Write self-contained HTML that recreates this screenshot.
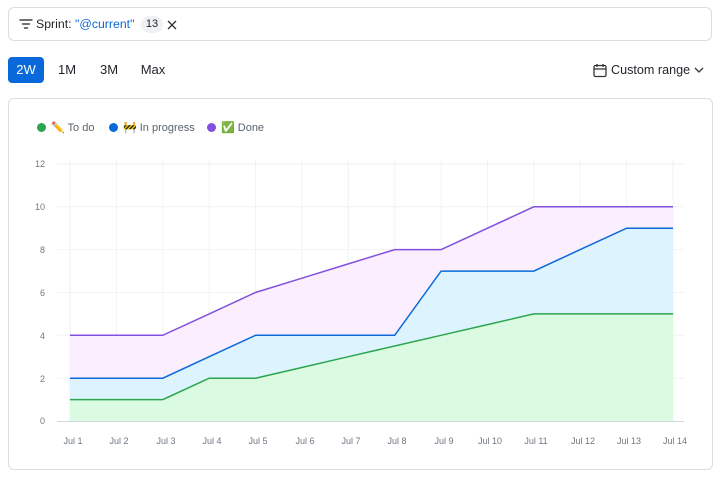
<!DOCTYPE html>
<html><head><meta charset="utf-8"><style>
body{margin:0;width:721px;height:478px;background:#fff;font-family:"Liberation Sans","Noto Sans CJK SC",sans-serif;position:relative;overflow:hidden;color:#1f2328}
.filter{position:absolute;left:8px;top:7px;width:704px;height:34px;border:1px solid #d8dee4;border-radius:6px;box-sizing:border-box}
.tab{position:absolute;top:57px;height:26px;line-height:26px;font-size:13px;text-align:center}
.card{position:absolute;left:8px;top:98px;width:705px;height:372px;border:1px solid #d8dee4;border-radius:6px;box-sizing:border-box}
.lg{position:absolute;top:121px;font-size:11px;color:#59636e}
.dot{display:inline-block;width:9px;height:9px;border-radius:50%;vertical-align:-1px;margin-right:5px}
</style></head><body>
<div class="filter">
<svg style="position:absolute;left:10px;top:10px" width="14" height="12" viewBox="0 0 14 12"><path d="M1 2h12M3.5 6h7M5.5 10h3" stroke="#444" stroke-width="1.4" stroke-linecap="round"/></svg>
<span style="position:absolute;left:27px;top:9px;font-size:12.3px">Sprint: <span style="color:#0969da">"@current"</span></span>
<span style="position:absolute;left:132px;top:8px;width:22px;height:17px;border-radius:9px;background:#eff1f3;font-size:11px;line-height:17px;text-align:center">13</span>
<svg style="position:absolute;left:158px;top:12px" width="10" height="10"><path d="M1 1l8 8M9 1l-8 8" stroke="#333" stroke-width="1.3"/></svg>
</div>
<div class="tab" style="left:8px;width:36px;background:#0969da;color:#fff;border-radius:4px">2W</div>
<div class="tab" style="left:52px;width:30px">1M</div>
<div class="tab" style="left:93px;width:32px">3M</div>
<div class="tab" style="left:136px;width:34px">Max</div>
<svg style="position:absolute;left:593px;top:63px" width="14" height="15" viewBox="0 0 14 15"><rect x="1" y="2.5" width="12" height="11" rx="1.5" fill="none" stroke="#333" stroke-width="1.3"/><path d="M1 6h12M4 1v3M10 1v3" stroke="#333" stroke-width="1.3"/></svg>
<span style="position:absolute;left:611px;top:63px;font-size:12.6px">Custom range</span>
<svg style="position:absolute;left:694px;top:67px" width="10" height="7"><path d="M1 1l4 4 4-4" fill="none" stroke="#333" stroke-width="1.3"/></svg>
<div class="card"></div>
<div class="lg" style="left:37px"><span class="dot" style="background:#2da44e"></span>✏️ To do</div>
<div class="lg" style="left:109px"><span class="dot" style="background:#0969da"></span>🚧 In progress</div>
<div class="lg" style="left:207px"><span class="dot" style="background:#8250df"></span>✅ Done</div>
<svg style="position:absolute;left:0;top:0" width="721" height="478">
<g stroke="#f1f2f4" stroke-width="1">
<path d="M57 164H684M57 206.8H684M57 249.6H684M57 292.5H684M57 335.3H684M57 378.2H684"/>
<path d="M70 160V421M116.4 160V421M162.8 160V421M209.2 160V421M255.5 160V421M301.9 160V421M348.3 160V421M394.7 160V421M441.1 160V421M487.5 160V421M533.8 160V421M580.2 160V421M626.6 160V421M673 160V421"/>
</g>
<path d="M57 421.5H684" stroke="#d0d7de"/>
<g font-size="9" fill="#6e7781" text-anchor="end"><text x="45" y="167">12</text><text x="45" y="210">10</text><text x="45" y="253">8</text><text x="45" y="296">6</text><text x="45" y="339">4</text><text x="45" y="382">2</text><text x="45" y="424">0</text></g>
<g font-size="9" fill="#6e7781" text-anchor="middle"><text x="73" y="444">Jul 1</text><text x="119" y="444">Jul 2</text><text x="166" y="444">Jul 3</text><text x="212" y="444">Jul 4</text><text x="258" y="444">Jul 5</text><text x="305" y="444">Jul 6</text><text x="351" y="444">Jul 7</text><text x="397" y="444">Jul 8</text><text x="444" y="444">Jul 9</text><text x="490" y="444">Jul 10</text><text x="536" y="444">Jul 11</text><text x="583" y="444">Jul 12</text><text x="629" y="444">Jul 13</text><text x="675" y="444">Jul 14</text></g>
<path d="M70 335.3L116.4 335.3L162.8 335.3L209.2 313.9L255.5 292.5L301.9 278.2L348.3 263.9L394.7 249.6L441.1 249.6L487.5 228.2L533.8 206.8L580.2 206.8L626.6 206.8L673 206.8L673 421L70 421Z" fill="#fbefff"/>
<path d="M70 378.2L116.4 378.2L162.8 378.2L209.2 356.7L255.5 335.3L301.9 335.3L348.3 335.3L394.7 335.3L441.1 271.1L487.5 271.1L533.8 271.1L580.2 249.6L626.6 228.2L673 228.2L673 421L70 421Z" fill="#ddf4ff"/>
<path d="M70 399.6L116.4 399.6L162.8 399.6L209.2 378.2L255.5 378.2L301.9 367.5L348.3 356.7L394.7 346L441.1 335.3L487.5 324.6L533.8 313.9L580.2 313.9L626.6 313.9L673 313.9L673 421L70 421Z" fill="#dafbe1"/>
<g fill="none" stroke-width="1.5">
<path d="M70 335.3L116.4 335.3L162.8 335.3L209.2 313.9L255.5 292.5L301.9 278.2L348.3 263.9L394.7 249.6L441.1 249.6L487.5 228.2L533.8 206.8L580.2 206.8L626.6 206.8L673 206.8" stroke="#8250df"/>
<path d="M70 378.2L116.4 378.2L162.8 378.2L209.2 356.7L255.5 335.3L301.9 335.3L348.3 335.3L394.7 335.3L441.1 271.1L487.5 271.1L533.8 271.1L580.2 249.6L626.6 228.2L673 228.2" stroke="#0969da"/>
<path d="M70 399.6L116.4 399.6L162.8 399.6L209.2 378.2L255.5 378.2L301.9 367.5L348.3 356.7L394.7 346L441.1 335.3L487.5 324.6L533.8 313.9L580.2 313.9L626.6 313.9L673 313.9" stroke="#2da44e"/>
</g>
</svg>
</body></html>
